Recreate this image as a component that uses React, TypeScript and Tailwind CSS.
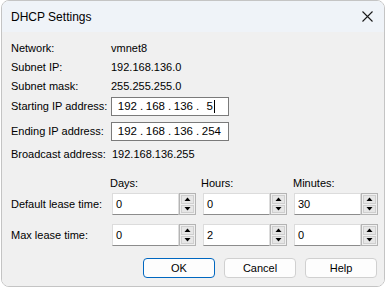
import React from "react";

const font = { fontFamily: '"Liberation Sans", Arial, sans-serif' };

function Spinner() {
  return (
    <div className="w-[17px] h-[22px] border border-[#b4b4b4] bg-[#f0f0f0] flex flex-col p-px gap-px">
      <div className="flex-1 bg-[#e6e6e6] border border-[#cfcfcf] flex items-center justify-center">
        <svg width="7" height="4" viewBox="0 0 7 4">
          <path d="M0.5 4 L3.5 0.5 L6.5 4 Z" fill="#000" />
        </svg>
      </div>
      <div className="flex-1 bg-[#e6e6e6] border border-[#cfcfcf] flex items-center justify-center">
        <svg width="7" height="4" viewBox="0 0 7 4">
          <path d="M0.5 0 L3.5 3.5 L6.5 0 Z" fill="#000" />
        </svg>
      </div>
    </div>
  );
}

function SpinBox({ value }: { value: string }) {
  return (
    <div className="flex items-center">
      <div className="w-[67px] h-[22px] bg-white border border-[#dcdcdc] border-b-[#8c8c8c] flex items-center pl-[3px] text-black">
        {value}
      </div>
      <Spinner />
    </div>
  );
}

function IpBox({ octets, cursor }: { octets: string[]; cursor?: boolean }) {
  return (
    <div className="w-[118px] h-[19px] bg-white border border-[#7a7a7a] flex items-center pl-[7px] text-[11.5px] text-black">
      {octets.map((o, i) => (
        <React.Fragment key={i}>
          <span className="w-[18px] flex justify-end items-center">
            {o}
            {cursor && i === 3 && <span className="inline-block w-px h-[13px] bg-black ml-px mr-[6px]" />}
          </span>
          {i < 3 && <span className="w-[10px] pl-[3px]">.</span>}
        </React.Fragment>
      ))}
    </div>
  );
}

export default function App() {
  const labelCls = "w-[100px] shrink-0 whitespace-nowrap";

  return (
    <div className="w-[387px] h-[290px] bg-white relative overflow-hidden" style={font}>
      <div className="ml-px w-[384px] h-[287px] rounded-lg border border-[#c4c4c4] overflow-hidden flex flex-col text-[11px] text-black">
        {/* Title bar */}
        <div className="h-[31px] shrink-0 bg-[#eff3f8] flex items-center justify-between pl-[9px] pr-[9px]">
          <span className="text-[12px]">DHCP Settings</span>
          <svg width="11" height="11" viewBox="0 0 11 11" className="mr-[2px]">
            <path d="M0.5 0.5 L10.5 10.5 M10.5 0.5 L0.5 10.5" stroke="#1a1a1a" strokeWidth="1.1" />
          </svg>
        </div>

        {/* Content */}
        <div className="flex-1 bg-[#f0f0f0] flex flex-col pl-[9px]">
          <div className="mt-[7px] h-[18px] flex items-center">
            <span className={labelCls}>Network:</span>
            <span>vmnet8</span>
          </div>
          <div className="mt-px h-[18px] flex items-center">
            <span className={labelCls}>Subnet IP:</span>
            <span>192.168.136.0</span>
          </div>
          <div className="mt-px h-[18px] flex items-center">
            <span className={labelCls}>Subnet mask:</span>
            <span>255.255.255.0</span>
          </div>
          <div className="mt-[2px] h-[19px] flex items-center">
            <span className={labelCls}>Starting IP address:</span>
            <IpBox octets={["192", "168", "136", "5"]} cursor />
          </div>
          <div className="mt-[6px] h-[19px] flex items-center">
            <span className={labelCls}>Ending IP address:</span>
            <IpBox octets={["192", "168", "136", "254"]} />
          </div>
          <div className="mt-[4px] h-[18px] flex items-center">
            <span className={labelCls}>Broadcast address:</span>
            <span className="ml-px">192.168.136.255</span>
          </div>

          <div className="mt-[11px] h-[18px] flex items-center">
            <span className="w-[99px] shrink-0" />
            <span className="w-[91px]">Days:</span>
            <span className="w-[92px]">Hours:</span>
            <span>Minutes:</span>
          </div>
          <div className="mt-px h-[22px] flex items-center">
            <span className="w-[101px] shrink-0 whitespace-nowrap">Default lease time:</span>
            <div className="flex gap-[7px]">
              <SpinBox value="0" />
              <SpinBox value="0" />
              <SpinBox value="30" />
            </div>
          </div>
          <div className="mt-[9px] h-[22px] flex items-center">
            <span className="w-[101px] shrink-0 whitespace-nowrap">Max lease time:</span>
            <div className="flex gap-[7px]">
              <SpinBox value="0" />
              <SpinBox value="2" />
              <SpinBox value="0" />
            </div>
          </div>

          <div className="mt-[12px] flex gap-[9px] pl-[132px]">
            <button className="w-[72px] h-[20px] rounded-[4px] bg-[#fdfdfd] border border-[#0067c0] text-[11px]">
              OK
            </button>
            <button className="w-[72px] h-[20px] rounded-[4px] bg-[#fdfdfd] border border-[#d0d0d0] text-[11px]">
              Cancel
            </button>
            <button className="w-[72px] h-[20px] rounded-[4px] bg-[#fdfdfd] border border-[#d0d0d0] text-[11px]">
              Help
            </button>
          </div>
        </div>
      </div>
    </div>
  );
}
